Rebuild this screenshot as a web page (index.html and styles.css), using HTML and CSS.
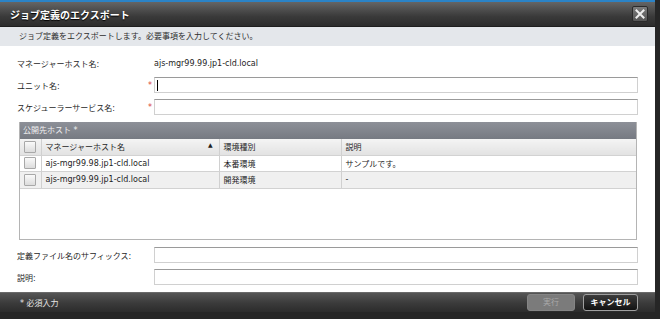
FILE: index.html
```html
<!DOCTYPE html>
<html lang="ja">
<head>
  <meta charset="UTF-8" />
  <title>ジョブ定義のエクスポート</title>
  <link rel="stylesheet" href="styles.css">
</head>
<body>

  <div class="dialog">
    <!-- タイトルバー -->
    <div class="titlebar">
      <span class="title">ジョブ定義のエクスポート</span>
      <span class="close">
        <svg width="10" height="10" viewBox="0 0 10 10">
          <path d="M1.5 1.5 L8.5 8.5 M8.5 1.5 L1.5 8.5" stroke="#eeeeee" stroke-width="2" stroke-linecap="square" />
        </svg>
      </span>
    </div>

    <div class="info">ジョブ定義をエクスポートします。必要事項を入力してください。</div>

    <div class="content">
      <div class="row">
        <span class="label">マネージャーホスト名:</span>
        <span class="req"></span>
        <span class="value">ajs-mgr99.99.jp1-cld.local</span>
      </div>
      <div class="row gap6">
        <span class="label">ユニット名:</span>
        <span class="req">*</span>
        <div class="field"><span class="caret"></span></div>
      </div>
      <div class="row gap6">
        <span class="label">スケジューラーサービス名:</span>
        <span class="req">*</span>
        <div class="field"></div>
      </div>

      <div class="hosts">
        <div class="hosts-title">公開先ホスト *</div>
        <table class="grid">
          <colgroup>
            <col class="c-check">
            <col class="c-name">
            <col class="c-env">
            <col>
          </colgroup>
          <thead>
            <tr>
              <th><span class="check"></span></th>
              <th><span class="sort">マネージャーホスト名<span class="arrow">▲</span></span></th>
              <th>環境種別</th>
              <th>説明</th>
            </tr>
          </thead>
          <tbody>
            <tr>
              <td><span class="check"></span></td>
              <td>ajs-mgr99.98.jp1-cld.local</td>
              <td>本番環境</td>
              <td>サンプルです。</td>
            </tr>
            <tr class="alt">
              <td><span class="check"></span></td>
              <td>ajs-mgr99.99.jp1-cld.local</td>
              <td>開発環境</td>
              <td>-</td>
            </tr>
          </tbody>
        </table>
      </div>

      <div class="row gap7">
        <span class="label">定義ファイル名のサフィックス:</span>
        <span class="req"></span>
        <div class="field"></div>
      </div>
      <div class="row gap6">
        <span class="label">説明:</span>
        <span class="req"></span>
        <div class="field"></div>
      </div>
    </div>

    <!-- フッター -->
    <div class="footer">
      <span class="note">* 必須入力</span>
      <div class="buttons">
        <span class="btn disabled">実行</span>
        <span class="btn cancel">キャンセル</span>
      </div>
    </div>
  </div>

</body>
</html>
```

FILE: styles.css
```css
* {
  margin: 0;
  padding: 0;
  box-sizing: border-box;
}

body {
  font-family: 'DejaVu Sans', 'Noto Sans CJK JP', sans-serif;
  font-size: 8px;
  color: #1e1e1e;
  background: #262626;
}

.dialog {
  width: 655px;
  height: 312px;
  background: #fff;
  display: flex;
  flex-direction: column;
}

.titlebar {
  height: 27px;
  border-top: 2px solid #2b83c6;
  border-bottom: 1px solid #1e1e1e;
  background: linear-gradient(#656565, #3a3a3a 60%, #2c2c2c);
  display: flex;
  align-items: center;
  justify-content: space-between;
  padding: 0 7px 0 10px;
}

.title {
  color: #fff;
  font-size: 10px;
  font-weight: bold;
  text-shadow: 0 1px 1px #000;
}

.close {
  width: 16px;
  height: 16px;
  display: flex;
  align-items: center;
  justify-content: center;
  background: linear-gradient(#7c7c7c, #555);
  border: 1px solid #2a2a2a;
  border-radius: 2px;
}

.info {
  height: 19px;
  line-height: 19px;
  padding-left: 19px;
  background: #e4e7eb;
  color: #2e2e2e;
}

.content {
  flex: 1;
  padding: 9px 17px 0 17px;
  display: flex;
  flex-direction: column;
}

.row {
  display: flex;
  align-items: center;
  height: 16px;
}

.gap6 { margin-top: 6px; }
.gap7 { margin-top: 7px; }

.label {
  width: 131px;
}

.req {
  width: 6px;
  color: #d9433a;
}

.field {
  flex: 1;
  height: 16px;
  border: 1px solid #d0d0d0;
  border-top-color: #9a9a9a;
  background: #fff;
  display: flex;
  align-items: center;
}

.caret {
  width: 1px;
  height: 11px;
  margin-left: 2px;
  background: #000;
}

.hosts {
  margin: 7px 1px 0 2px;
  height: 118px;
  border: 1px solid #b4b4b4;
  border-top: none;
  background: #fff;
}

.hosts-title {
  height: 17px;
  line-height: 17px;
  padding-left: 3px;
  color: #f0f0f0;
  background: linear-gradient(#8d9098, #767a82);
}

.grid {
  width: 100%;
  border-collapse: collapse;
  table-layout: fixed;
}

.c-check { width: 21px; }
.c-name { width: 178px; }
.c-env { width: 122px; }

.grid th,
.grid td {
  height: 16px;
  padding: 0 4px;
  text-align: left;
  font-weight: normal;
  border-left: 1px solid #d0d0d0;
  border-bottom: 1px solid #d2d2d2;
  white-space: nowrap;
}

.grid th:first-child,
.grid td:first-child {
  border-left: none;
  padding: 0 0 0 4px;
}

.grid th {
  background: linear-gradient(#f4f4f4, #e2e2e2);
}

.grid tr.alt td {
  height: 17px;
  background: #f0f0f0;
}

.sort {
  display: flex;
  justify-content: space-between;
  padding-right: 2px;
}

.arrow {
  font-size: 6px;
}

.check {
  display: block;
  width: 12px;
  height: 12px;
  border: 1px solid #a8a8a8;
  border-radius: 1px;
  background: linear-gradient(#fafafa, #dcdcdc);
}

.footer {
  height: 20px;
  background: linear-gradient(#555, #3a3a3a 55%, #2c2c2c);
  border-top: 1px solid #6a6a6a;
  display: flex;
  align-items: center;
  justify-content: space-between;
  padding: 0 17px 0 20px;
}

.note {
  color: #e6e6e6;
}

.buttons {
  display: flex;
  gap: 8px;
}

.btn {
  height: 17px;
  line-height: 15px;
  text-align: center;
  border-radius: 3px;
  font-weight: bold;
}

.btn.disabled {
  width: 48px;
  color: #a9a9a9;
  background: #7b7b7b;
  border: 1px solid #858585;
  font-weight: normal;
}

.btn.cancel {
  width: 55px;
  color: #fff;
  background: linear-gradient(#3c3c3c, #121212);
  border: 1px solid #a0a0a0;
}
```
